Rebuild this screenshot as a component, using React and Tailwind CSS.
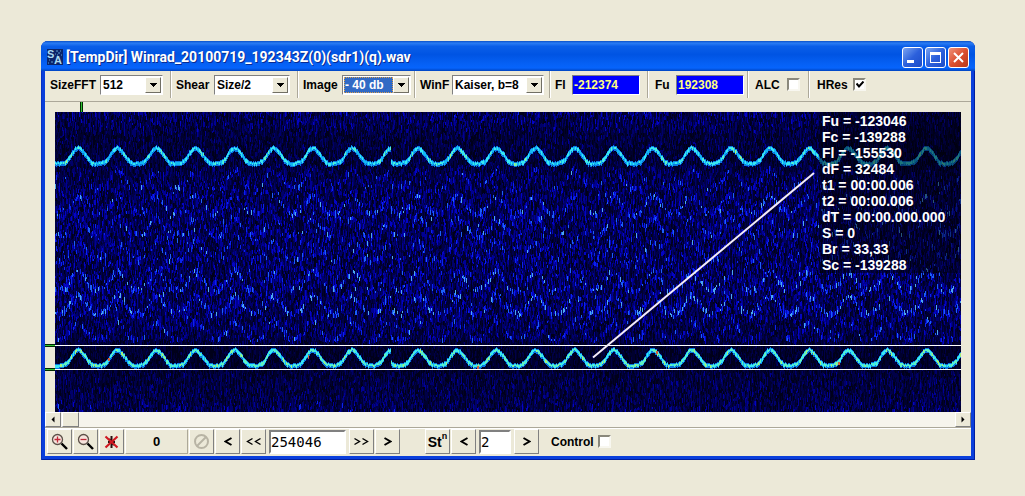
import React, { useMemo } from "react";

const PLOT_W = 906;
const PLOT_H = 300;
const PERIOD = 39.1;
const SKIP_X = 336;

const NOISE_COLORS = ["#00001a", "#00002e", "#000048", "#00006a", "#000094", "#0404c4", "#0a24ee", "#1c60f8", "#4ca8f0"];
const TRACE_COLORS = ["#0a78e0", "#12b8f4", "#38e8f0", "#60f2c0", "#a4f27c"];

// Normalised shape of one sweep, from crest (0) to trough (1) and back.
const SHAPE = [[0, 0], [0.07, 0.08], [0.17, 0.36], [0.26, 0.68], [0.34, 0.9], [0.43, 1], [0.58, 0.97], [0.68, 0.86], [0.76, 0.66], [0.84, 0.32], [0.92, 0.08], [1, 0]];

function sweep(x) {
  const crest = x < SKIP_X ? 23 : 363;
  const p = ((((x - crest) % PERIOD) + PERIOD) % PERIOD) / PERIOD;
  for (let i = 1; i < SHAPE.length; i++) {
    if (p <= SHAPE[i][0]) {
      const [x0, y0] = SHAPE[i - 1];
      const [x1, y1] = SHAPE[i];
      return y0 + ((y1 - y0) * (p - x0)) / (x1 - x0);
    }
  }
  return 0;
}

function makeRandom(seed) {
  let s = seed;
  return () => {
    s = (s + 0x6d2b79f5) | 0;
    let t = Math.imul(s ^ (s >>> 15), 1 | s);
    t = (t + Math.imul(t ^ (t >>> 7), 61 | t)) ^ t;
    return ((t ^ (t >>> 14)) >>> 0) / 4294967296;
  };
}

// Typical strength of the background at each height of the plot.
const ENERGY = [[0, 0.5], [14, 0.46], [24, 0.36], [50, 0.34], [62, 0.42], [80, 0.48], [150, 0.52], [205, 0.5], [228, 0.4], [234, 0.26], [256, 0.24], [262, 0.36], [290, 0.42], [300, 0.44]];
function energy(y) {
  for (let i = 1; i < ENERGY.length; i++) {
    if (y <= ENERGY[i][0]) {
      const [x0, y0] = ENERGY[i - 1];
      const [x1, y1] = ENERGY[i];
      return y0 + ((y1 - y0) * (y - x0)) / (x1 - x0);
    }
  }
  return 0.4;
}

const ECHOES = [[58, 0.26], [84, 0.36], [106, 0.3], [130, 0.2], [160, 0.4], [184, 0.46], [210, 0.3]];

function buildSpectrogram() {
  const rnd = makeRandom(77);
  const noise = NOISE_COLORS.map(() => []);
  const trace = TRACE_COLORS.map(() => []);
  for (let x = 0; x < PLOT_W; x++) {
    const s = sweep(x);
    let y = -Math.floor(rnd() * 4);
    while (y < PLOT_H) {
      const len = 2 + Math.floor(rnd() * 4);
      const mid = y + len / 2;
      let e = energy(mid);
      for (const [top, gain] of ECHOES) {
        const d = Math.abs(mid - (top + s * 18));
        if (d < 5) e += gain * (1 - d / 5);
      }
      const r = (rnd() + rnd()) / 2;
      let v = r * e * 2 * 6.4;
      if (rnd() < 0.25) v *= 0.4;
      if (e > 0.42 && mid > 55 && rnd() < 0.03) v += 2.2;
      const level = Math.max(0, Math.min(NOISE_COLORS.length - 1, Math.floor(v)));
      if (level > 0) noise[level].push(`M${x} ${y}h1v${len}h-1z`);
      y += len;
    }
    [[34, 0], [236, 0.9]].forEach(([top, bias]) => {
      const yy = Math.round(top + s * 16 + rnd() * 1.3);
      const steep = Math.abs(sweep(x + 1) - sweep(x - 1)) > 0.06 ? 1 : 0;
      trace[0].push(`M${x} ${yy - 1}h1v${5 + steep}h-1z`);
      const c = Math.min(4, 1 + Math.floor(rnd() * 2.2 + bias + (rnd() < 0.1 ? 1 : 0)));
      trace[c].push(`M${x} ${yy}h1v${(rnd() < 0.5 ? 2 : 3) + steep}h-1z`);
    });
  }
  return { noise: noise.map((a) => a.join("")), trace: trace.map((a) => a.join("")) };
}

function Spectrogram() {
  const data = useMemo(buildSpectrogram, []);
  return (
    <svg className="block h-[300px] w-full" viewBox="0 0 906 300" preserveAspectRatio="none" role="img" aria-label="Spectrogram">
      <rect width="906" height="300" fill={NOISE_COLORS[0]} />
      <g shapeRendering="crispEdges">
        {data.noise.map((d, i) => <path key={i} d={d} fill={NOISE_COLORS[i]} />)}
        {data.trace.map((d, i) => <path key={i} d={d} fill={TRACE_COLORS[i]} />)}
        <path d="M53 246h2v3h-2zM253 243h1v4h-1zM601 239h2v3h-2zM422 254h2v3h-2zM783 250h2v3h-2z" fill="#d0603c" />
        <rect x="764" y="0" width="142" height="161" fill="#000008" opacity="0.5" />
        <rect x="0" y="233" width="906" height="1" fill="#fff" />
        <rect x="0" y="257" width="906" height="1" fill="#fff" />
      </g>
      <path d="M538 245.500L759 61" stroke="#f4ecf8" strokeWidth="2" />
    </svg>
  );
}

function AppIcon() {
  return (
    <svg width="16" height="16" viewBox="0 0 16 16" aria-hidden="true">
      <rect width="16" height="16" fill="#0a246a" />
      <path d="M9 2h2M13 2h1M8 5h1M11 4h2M2 11h1M4 13h2M1 14h1M10 6h1M14 6h1" stroke="#5f9fd0" />
      <text x="0" y="9" fontSize="11" fontWeight="700" fontFamily="Liberation Sans, sans-serif" fill="#a9d9f0">S</text>
      <text x="7" y="15" fontSize="11" fontWeight="700" fontFamily="Liberation Sans, sans-serif" fill="#a9d9f0">A</text>
    </svg>
  );
}

function Group({ className, children }) {
  return <div className={`flex h-[27px] shrink-0 items-center justify-between border-r border-[#aca899] shadow-[1px_0_0_#fff] ${className}`}>{children}</div>;
}

function Select({ id, label, value, className, selected }) {
  return (
    <>
      <label htmlFor={id}>{label}</label>
      <span className={`relative flex h-5 items-center border border-[#808080] border-r-white border-b-white bg-white ${className}`}>
        <select
          id={id}
          defaultValue={value}
          className={selected
            ? "m-px mr-[17px] h-4 w-full appearance-none border border-dotted border-[#d8a050] bg-[#316ac5] text-[12px] leading-3 font-bold text-white outline-none"
            : "h-4 w-full appearance-none bg-white pr-4 pl-0.5 text-[12px] leading-4 font-bold text-black outline-none"}
        >
          <option>{value}</option>
        </select>
        <span className="pointer-events-none absolute top-px right-px flex h-4 w-4 items-center justify-center border border-white border-r-[#716f64] border-b-[#716f64] bg-[#ece9d8]">
          <svg width="7" height="4" viewBox="0 0 7 4" shapeRendering="crispEdges"><path d="M0 0h7v1h-1v1h-1v1h-1v1h-1v-1h-1v-1h-1v-1h-1z" /></svg>
        </span>
      </span>
    </>
  );
}

function Check({ id, checked }) {
  return (
    <span className="relative flex h-[13px] w-[13px]">
      <input id={id} type="checkbox" defaultChecked={checked} className="peer h-[13px] w-[13px] appearance-none border-2 border-[#8a887c] border-r-[#f8f7f0] border-b-[#f8f7f0] bg-white" />
      <svg className="pointer-events-none absolute top-[3px] left-[3px] hidden peer-checked:block" width="8" height="8" viewBox="0 0 8 8"><path d="M0.500 2.500L3 5.500L7.500 0.500" fill="none" stroke="#000" strokeWidth="2" /></svg>
    </span>
  );
}

function Freq({ id, label, value }) {
  return (
    <>
      <label htmlFor={id}>{label}</label>
      <input id={id} defaultValue={value} className="h-5 w-[68px] border border-[#808080] border-r-white border-b-white bg-[#0000ff] pl-px text-[12px] font-bold text-[#ffff80] outline-none" />
    </>
  );
}

function Tool({ label, className = "", children }) {
  return (
    <button type="button" aria-label={label} className={`flex h-[25px] w-[25px] shrink-0 items-center justify-center border border-white border-r-[#808080] border-b-[#808080] bg-[#ece9d8] ${className}`}>
      {children}
    </button>
  );
}

function Magnifier({ plus }) {
  return (
    <svg width="17" height="17" viewBox="0 0 17 17">
      <circle cx="6.500" cy="6.500" r="5" fill="#f6e4dc" stroke="#5c5048" strokeWidth="1.300" />
      <path d={plus ? "M3.500 6.500h6M6.500 3.500v6" : "M3.500 6.500h6"} stroke="#c02838" strokeWidth="1.300" />
      <path d="M10.500 10.500l5.500 5.500" stroke="#000" strokeWidth="2.400" />
    </svg>
  );
}

function Chevron({ count = 1, left }) {
  const wide = count === 1;
  const d = wide
    ? (left ? "M7.500 1L1.500 4.500L7.500 8" : "M0.500 1L6.500 4.500L0.500 8")
    : (left ? "M6.500 1.500L1.500 4.500L6.500 7.500" : "M0.500 1.500L5.500 4.500L0.500 7.500");
  return (
    <svg width={wide ? 8 : 15} height="9" viewBox={wide ? "0 0 8 9" : "0 0 15 9"} fill="none" stroke="#000" strokeWidth={wide ? 2 : 1.4}>
      <path d={d} />
      {!wide && <path d={d} transform="translate(8 0)" />}
    </svg>
  );
}

function TitleButton({ label, close, children }) {
  return (
    <button type="button" aria-label={label} className={`flex h-[21px] w-[21px] items-center justify-center rounded-[3px] border border-white ${close ? "bg-linear-to-br from-[#ee9078] via-[#dc5030] to-[#b83818]" : "bg-linear-to-br from-[#7ca4f0] via-[#2c60dc] to-[#1c4cc8]"}`}>
      {children}
    </button>
  );
}

function Arrow({ right }) {
  return (
    <svg width="4" height="7" viewBox="0 0 4 7"><path d={right ? "M0.500 0.500L3.500 3.500L0.500 6.500z" : "M3.500 0.500L0.500 3.500L3.500 6.500z"} /></svg>
  );
}

const STATS = ["Fu = -123046", "Fc = -139288", "Fl = -155530", "dF = 32484", "t1 = 00:00.006", "t2 = 00:00.006", "dT = 00:00.000.000", "S = 0", "Br = 33,33", "Sc = -139288"];

export default function App() {
  return (
    <div className="min-h-screen bg-[#ece9d8] pt-[41px] pr-[50px] pb-9 pl-[41px] font-['Liberation_Sans',Arial,sans-serif] text-[12px] font-bold text-black">
      <main className="rounded-t-[7px] bg-[#0a3fdc] px-1 pb-1 shadow-[inset_1px_0_0_#0831c0,inset_-1px_-1px_0_#001ea0]">
        <header className="-mx-1 flex h-[30px] items-center justify-between rounded-t-[7px] bg-[linear-gradient(180deg,#0a50c8_0%,#2a7cf4_7%,#0a5ee8_18%,#0054e3_45%,#0560f4_75%,#0664fc_90%,#0044c0_100%)] pt-0.5 pr-1.5 pl-1.5">
          <div className="flex items-center gap-[3px]">
            <AppIcon />
            <h1 className="font-['Roboto','Open_Sans',sans-serif] text-[14px] leading-4 font-bold whitespace-nowrap text-white [text-shadow:1px_1px_0_#0a2a90]">[TempDir] Winrad_20100719_192343Z(0)(sdr1)(q).wav</h1>
          </div>
          <div className="flex gap-0.5">
            <TitleButton label="Minimize"><svg width="13" height="13" viewBox="0 0 13 13"><path d="M1 9h7v3H1z" fill="#fff" /></svg></TitleButton>
            <TitleButton label="Maximize"><svg width="13" height="13" viewBox="0 0 13 13"><path d="M1 1h11v11H1zM2 4v7h9V4z" fill="#fff" fillRule="evenodd" /></svg></TitleButton>
            <TitleButton label="Close" close><svg width="13" height="13" viewBox="0 0 13 13"><path d="M2 2l9 9M11 2l-9 9" stroke="#fff" strokeWidth="2" /></svg></TitleButton>
          </div>
        </header>

        <div className="bg-[#ece9d8]">
          <div className="flex h-[31px] items-center border-b border-[#aca899] pb-[3px]">
            <Group className="w-[126px] pr-[7px] pl-[5px]"><Select id="size" label="SizeFFT" value="512" className="w-[63px]" /></Group>
            <Group className="w-[127px] pr-[7px] pl-[5px]"><Select id="shear" label="Shear" value="Size/2" className="w-[76px]" /></Group>
            <Group className="w-[117px] pr-[3px] pl-[5px]"><Select id="image" label="Image" value="- 40 db" className="w-[69px]" selected /></Group>
            <Group className="w-[135px] pr-[5px] pl-[5px]"><Select id="winf" label="WinF" value="Kaiser, b=8" className="w-[92px]" /></Group>
            <Group className="w-[98px] pr-[7px] pl-[5px]"><Freq id="fl" label="Fl" value="-212374" /></Group>
            <Group className="w-[100px] pr-[3px] pl-[7px]"><Freq id="fu" label="Fu" value="192308" /></Group>
            <Group className="w-[61px] pr-[8px] pl-[7px]"><label htmlFor="alc">ALC</label><Check id="alc" /></Group>
            <div className="flex shrink-0 items-center gap-[5px] pl-2"><label htmlFor="hres">HRes</label><Check id="hres" checked /></div>
          </div>

          <div className="flex h-2.5 pl-[35px]"><span className="w-[3px] border-x border-[#002800] bg-[#30c030]" /></div>

          <div className="flex">
            <div className="flex w-2.5 shrink-0 flex-col gap-[21px] pt-[232px]">
              <span className="h-[3px] border-y border-[#002800] bg-[#30c030]" />
              <span className="h-[3px] border-y border-[#002800] bg-[#30c030]" />
            </div>
            <div className="relative min-w-0 flex-1">
              <Spectrogram />
              <ul className="absolute top-px right-0 w-[139px] text-[14px] leading-4 whitespace-nowrap text-white">
                {STATS.map((s) => <li key={s}>{s}</li>)}
              </ul>
            </div>
            <div className="w-2.5 shrink-0" />
          </div>

          <div className="flex h-[15px] bg-[#f6f4ec]">
            <button type="button" aria-label="Scroll left" className="flex w-4 items-center justify-center border border-white border-r-[#808080] border-b-[#808080] bg-[#ece9d8]"><Arrow /></button>
            <div className="flex flex-1"><span className="ml-px w-[17px] border border-white border-r-[#808080] border-b-[#808080] bg-[#ece9d8]" /></div>
            <button type="button" aria-label="Scroll right" className="flex w-4 items-center justify-center border border-white border-r-[#808080] border-b-[#808080] bg-[#ece9d8]"><Arrow right /></button>
          </div>

          <footer className="flex h-[29px] items-center gap-px border-t border-[#aca899] pb-px pl-0.5 shadow-[inset_0_1px_0_#fff]">
            <Tool label="Zoom in"><Magnifier plus /></Tool>
            <Tool label="Zoom out"><Magnifier /></Tool>
            <Tool label="Clear">
              <svg width="15" height="15" viewBox="0 0 15 15"><path d="M7.500 2v12M4 8h7M5 5l5 6" stroke="#281010" strokeWidth="2" /><path d="M1.500 2.500l12 11M13.500 2.500l-12 11" stroke="#d01820" strokeWidth="2.200" /></svg>
            </Tool>
            <output className="flex h-[25px] w-[63px] items-center justify-center border border-white border-r-[#aca899] border-b-[#aca899] text-[13px]">0</output>
            <Tool label="Stop">
              <svg width="17" height="17" viewBox="0 0 17 17" fill="none" stroke="#b8b4a4" strokeWidth="2"><circle cx="8.500" cy="8.500" r="6.500" /><path d="M4 13L13 4" /></svg>
            </Tool>
            <Tool label="Back"><Chevron left /></Tool>
            <Tool label="Fast back"><Chevron left count={2} /></Tool>
            <input aria-label="Position" defaultValue="254046" className="mx-0.5 h-6 w-[77px] border-2 border-[#808080] border-r-white border-b-white bg-white font-['DejaVu_Sans_Mono',monospace] text-[14px] font-normal outline-none" />
            <Tool label="Fast forward"><Chevron count={2} /></Tool>
            <Tool label="Forward"><Chevron /></Tool>
            <Tool label="Step mode" className="ml-6">
              <span className="flex items-start text-[14px] leading-5">St<span className="text-[9px] leading-[9px]">n</span></span>
            </Tool>
            <Tool label="Previous step"><Chevron left /></Tool>
            <input aria-label="Step" defaultValue="2" className="mx-0.5 h-6 w-8 border-2 border-[#808080] border-r-white border-b-white bg-white font-['DejaVu_Sans_Mono',monospace] text-[14px] font-normal outline-none" />
            <Tool label="Next step"><Chevron /></Tool>
            <label htmlFor="control" className="ml-[11px]">Control</label>
            <span className="ml-[3px]"><Check id="control" /></span>
          </footer>
        </div>
      </main>
    </div>
  );
}
